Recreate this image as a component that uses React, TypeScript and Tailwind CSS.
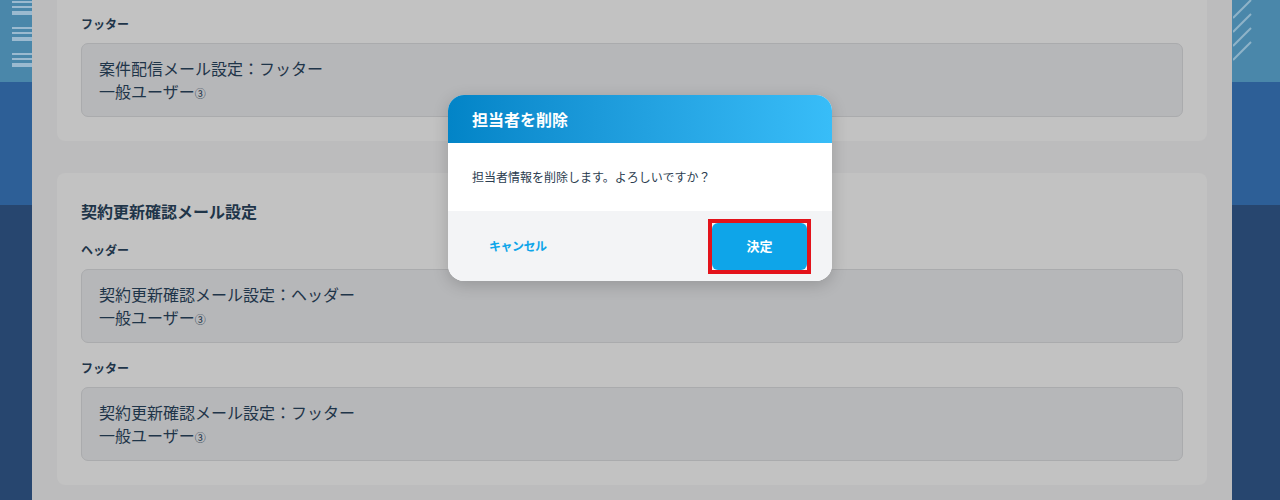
const FONT = "font-['Noto_Sans_CJK_JP','Noto_Sans',sans-serif]";

function SideLines() {
  return (
    <div className="flex flex-col gap-[12px] pl-[12px] pt-[1px]">
      {[0, 1, 2].map((g) => (
        <div key={g} className="flex flex-col gap-[3px]">
          <div className="h-[2px] w-[20px] bg-[#9bbad0]" />
          <div className="h-[2px] w-[20px] bg-[#9bbad0]" />
          <div className="h-[4px] w-[20px] bg-[#9bbad0]" />
        </div>
      ))}
    </div>
  );
}

function SideStrip({ right }: { right?: boolean }) {
  return (
    <div className={right ? "flex w-[48px] shrink-0 flex-col" : "flex w-[32px] shrink-0 flex-col"}>
      <div className="h-[82px] bg-[#4a87aa]">
        {right ? (
          <svg width="20" height="64" viewBox="0 0 20 64" className="ml-[1px]">
            {[0, 14, 28, 42].map((y) => (
              <line key={y} x1="0" y1={y + 18} x2="18" y2={y} stroke="#8fb3c8" strokeWidth="2" />
            ))}
          </svg>
        ) : (
          <SideLines />
        )}
      </div>
      <div className="h-[123px] bg-[#2d5f97]" />
      <div className="flex-1 bg-[#27466f]" />
    </div>
  );
}

function TextBox({ lines }: { lines: string[] }) {
  return (
    <div className="rounded-[7px] border border-[#aaabad] bg-[#b6b7b9] px-[17px] py-[13px] text-[16px] leading-[23px] text-[#1f3549]">
      {lines.map((l, i) => (
        <div key={i} className="h-[23px]">{l}</div>
      ))}
      <div className="h-[23px]">
        一般ユーザー<span className="text-[11px] leading-none">③</span>
      </div>
    </div>
  );
}

function Label({ children }: { children: string }) {
  return <div className="mb-[10px] text-[12px] font-bold leading-[18px] text-[#1f3549]">{children}</div>;
}

export default function App() {
  return (
    <div className={`${FONT} relative flex h-[500px] w-[1280px] overflow-hidden`}>
      <SideStrip />
      <div className="flex flex-1 flex-col gap-[32px] bg-[#bcbcbd] px-[25px]">
        <div className="rounded-b-[8px] bg-[#c2c2c2] px-[24px] pb-[24px] pt-[15px]">
          <Label>フッター</Label>
          <TextBox lines={["案件配信メール設定：フッター"]} />
        </div>
        <div className="rounded-[8px] bg-[#c2c2c2] px-[24px] pb-[24px] pt-[26px]">
          <div className="mb-[18px] text-[16px] font-bold leading-[24px] text-[#1f3549]">契約更新確認メール設定</div>
          <Label>ヘッダー</Label>
          <TextBox lines={["契約更新確認メール設定：ヘッダー"]} />
          <div className="h-[16px]" />
          <Label>フッター</Label>
          <TextBox lines={["契約更新確認メール設定：フッター"]} />
        </div>
      </div>
      <SideStrip right />

      <div className="absolute left-[448px] top-[95px] w-[384px] overflow-hidden rounded-[16px] bg-white shadow-[0_4px_16px_rgba(0,0,0,0.18)]">
        <div className="flex h-[48px] items-center bg-gradient-to-r from-[#0284c7] to-[#38bdf8] px-[24px] text-[16px] font-bold text-white">
          担当者を削除
        </div>
        <div className="flex h-[68px] items-center px-[24px] text-[12px] text-[#2b3d50]">
          担当者情報を削除します。よろしいですか？
        </div>
        <div className="flex h-[70px] items-center justify-between bg-[#f3f4f6] pl-[41px] pr-[21px]">
          <button className="text-[12px] font-bold tracking-[-0.5px] text-[#0ea5e9]">キャンセル</button>
          <span className="border-4 border-[#e3131b]">
            <button className="flex h-[47px] w-[95px] items-center justify-center rounded-[6px] bg-[#0ea5e9] text-[13px] font-bold text-white">
              決定
            </button>
          </span>
        </div>
      </div>
    </div>
  );
}
